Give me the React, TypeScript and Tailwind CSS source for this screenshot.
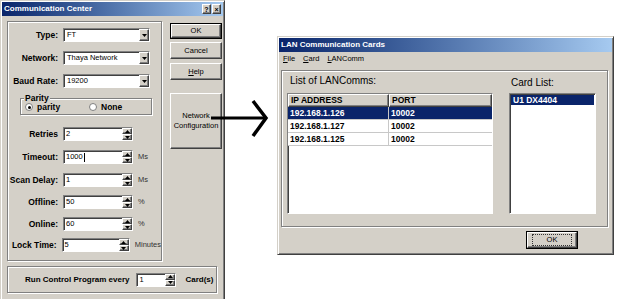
import React from 'react'

const sunken = 'border border-t-[#808080] border-l-[#808080] border-r-white border-b-white shadow-[inset_1px_1px_0_#404040]'
const raised = 'border border-t-white border-l-white border-r-[#404040] border-b-[#404040] shadow-[inset_-1px_-1px_0_#808080]'
const etched = 'border border-[#808080] shadow-[inset_1px_1px_0_#fff,1px_1px_0_#fff]'
const frame = 'border border-t-[#d4d0c8] border-l-[#d4d0c8] border-r-[#404040] border-b-[#404040] shadow-[inset_1px_1px_0_#fff,inset_-1px_-1px_0_#808080]'

const DownArrow = () => (
  <svg width="5" height="3" viewBox="0 0 5 3">
    <path d="M0 0h5L2.5 3z" fill="#000" />
  </svg>
)

const ComboBox = ({ value }: { value: string }) => (
  <div className={`flex h-[14px] w-[87px] bg-white ${sunken}`}>
    <span className="flex-1 pl-[3px] text-[7.5px] leading-[12px] text-black">{value}</span>
    <div className={`flex w-[10px] items-center justify-center bg-[#d4d0c8] ${raised}`}>
      <DownArrow />
    </div>
  </div>
)

const SpinBox = ({ value, caret }: { value: string; caret?: boolean }) => (
  <div className={`flex h-[14px] w-[70px] bg-white ${sunken}`}>
    <span className="flex flex-1 items-center pl-[2px] text-[7.5px] leading-[12px] text-black">
      {value}
      {caret && <span className="ml-[1px] inline-block h-[9px] w-[1px] bg-black" />}
    </span>
    <div className="flex w-[10px] flex-col bg-[#d4d0c8]">
      <div className={`flex flex-1 items-center justify-center ${raised}`}>
        <svg width="5" height="3" viewBox="0 0 5 3">
          <path d="M0 3h5L2.5 0z" fill="#000" />
        </svg>
      </div>
      <div className={`flex flex-1 items-center justify-center ${raised}`}>
        <DownArrow />
      </div>
    </div>
  </div>
)

const FieldRow = ({ label, children, unit, className = '' }: { label: string; children: React.ReactNode; unit?: string; className?: string }) => (
  <div className={`flex h-[14px] items-center ${className}`}>
    <span className="w-[55px] pr-[5px] text-right text-[8.5px] font-bold text-black">{label}</span>
    {children}
    {unit && <span className="ml-[5px] text-[7.5px] text-[#333]">{unit}</span>}
  </div>
)

const Radio = ({ checked }: { checked?: boolean }) => (
  <span className="inline-flex h-[8px] w-[8px] items-center justify-center rounded-full border border-[#808080] bg-white">
    {checked && <span className="h-[3px] w-[3px] rounded-full bg-black" />}
  </span>
)

const TitleBar = ({ title, buttons }: { title: string; buttons?: boolean }) => (
  <div className="flex h-[14px] items-center bg-gradient-to-r from-[#0a246a] to-[#a6caf0] pl-[2px] pr-[2px]">
    <span className="flex-1 text-[8px] font-bold text-white">{title}</span>
    {buttons && (
      <div className="flex gap-[1px]">
        <span className={`flex h-[10px] w-[9px] items-center justify-center bg-[#d4d0c8] text-[7px] font-bold leading-none text-black ${raised}`}>?</span>
        <span className={`flex h-[10px] w-[9px] items-center justify-center bg-[#d4d0c8] text-[7px] font-bold leading-none text-black ${raised}`}>×</span>
      </div>
    )}
  </div>
)

const Button = ({ children, className = '' }: { children: React.ReactNode; className?: string }) => (
  <div className={`flex items-center justify-center bg-[#d4d0c8] text-[7.5px] text-black ${raised} ${className}`}>{children}</div>
)

const CommunicationCenter = () => (
  <div className={`absolute left-0 top-0 h-[312px] w-[225px] bg-[#d4d0c8] p-[1px] ${frame}`}>
    <TitleBar title="Communication Center" buttons />
    <div className="flex gap-[8px] pl-[5px] pt-[5px]">
      <div className="flex w-[155px] flex-col">
        <div className={`flex h-[240px] flex-col pt-[6px] ${etched}`}>
          <FieldRow label="Type:"><ComboBox value="FT" /></FieldRow>
          <FieldRow label="Network:" className="mt-[9px]"><ComboBox value="Thaya Network" /></FieldRow>
          <FieldRow label="Baud Rate:" className="mt-[9px]"><ComboBox value="19200" /></FieldRow>
          <div className={`relative ml-[12px] mt-[10px] h-[17px] w-[132px] ${etched}`}>
            <span className="absolute -top-[6px] left-[3px] bg-[#d4d0c8] px-[1px] text-[8.5px] font-bold leading-[10px] text-black">Parity</span>
            <div className="flex h-full items-center pl-[4px] pt-[1px] text-[8.5px] font-bold text-black">
              <Radio checked />
              <span className="ml-[4px] w-[52px]">parity</span>
              <Radio />
              <span className="ml-[4px]">None</span>
            </div>
          </div>
          <FieldRow label="Retries" className="mt-[12px]"><SpinBox value="2" /></FieldRow>
          <FieldRow label="Timeout:" unit="Ms" className="mt-[9px]"><SpinBox value="1000" caret /></FieldRow>
          <FieldRow label="Scan Delay:" unit="Ms" className="mt-[9px]"><SpinBox value="1" /></FieldRow>
          <FieldRow label="Offline:" unit="%" className="mt-[8px]"><SpinBox value="50" /></FieldRow>
          <FieldRow label="Online:" unit="%" className="mt-[8px]"><SpinBox value="60" /></FieldRow>
          <FieldRow label="Lock Time:" unit="Minutes" className="mt-[7px]"><SpinBox value="5" /></FieldRow>
        </div>
      </div>
      <div className="flex w-[52px] flex-col pt-[2px]">
        <div className="border border-black">
          <Button className="h-[14px]">OK</Button>
        </div>
        <Button className="mt-[3px] h-[17px]">Cancel</Button>
        <Button className="mt-[4px] h-[17px]"><span><span className="underline">H</span>elp</span></Button>
        <Button className="mt-[13px] h-[56px] text-center leading-[10px]">
          <span>Network<br />Configuration</span>
        </Button>
      </div>
    </div>
    <div className={`ml-[5px] mt-[5px] flex h-[27px] w-[210px] items-center pl-[17px] ${etched}`}>
      <span className="text-[8px] font-bold text-black">Run Control Program every</span>
      <div className="ml-[7px]">
        <div className={`flex h-[14px] w-[40px] bg-white ${sunken}`}>
          <span className="flex-1 pl-[2px] text-[7.5px] leading-[12px] text-black">1</span>
          <div className="flex w-[10px] flex-col bg-[#d4d0c8]">
            <div className={`flex flex-1 items-center justify-center ${raised}`}>
              <svg width="5" height="3" viewBox="0 0 5 3"><path d="M0 3h5L2.5 0z" fill="#000" /></svg>
            </div>
            <div className={`flex flex-1 items-center justify-center ${raised}`}>
              <DownArrow />
            </div>
          </div>
        </div>
      </div>
      <span className="ml-[9px] text-[8px] font-bold text-black">Card(s)</span>
    </div>
  </div>
)

const rows = [
  { ip: '192.168.1.126', port: '10002', selected: true },
  { ip: '192.168.1.127', port: '10002' },
  { ip: '192.168.1.125', port: '10002' },
]

const LanCards = () => (
  <div className={`absolute left-[277px] top-[36px] h-[219px] w-[337px] bg-[#d4d0c8] p-[1px] shadow-[2px_2px_3px_rgba(0,0,0,0.15)] ${frame}`}>
    <TitleBar title="LAN Communication Cards" />
    <div className="flex h-[14px] items-center gap-[8px] pl-[4px] text-[7.5px] text-black">
      <span><span className="underline">F</span>ile</span>
      <span><span className="underline">C</span>ard</span>
      <span><span className="underline">L</span>ANComm</span>
    </div>
    <div className={`ml-[2px] mt-[4px] flex h-[157px] w-[327px] pl-[5px] pt-[2px] ${etched}`}>
      <div className="flex w-[206px] flex-col">
        <span className="h-[20px] pl-[3px] text-[10px] leading-[16px] text-black">List of LANComms:</span>
        <div className={`h-[121px] bg-white ${sunken}`}>
          <div className="flex h-[13px] bg-[#d4d0c8] text-[8.5px] font-bold text-black">
            <span className={`w-[101px] pl-[2px] leading-[11px] ${raised}`}>IP ADDRESS</span>
            <span className={`flex-1 pl-[2px] leading-[11px] ${raised}`}>PORT</span>
          </div>
          {rows.map((r) => (
            <div
              key={r.ip}
              className={`flex h-[13px] border-b border-[#c8c8c8] text-[8.5px] font-bold leading-[12px] ${r.selected ? 'bg-[#0a246a] text-white' : 'bg-white text-black'}`}
            >
              <span className="w-[101px] border-r border-[#c8c8c8] pl-[2px]">{r.ip}</span>
              <span className="flex-1 pl-[2px]">{r.port}</span>
            </div>
          ))}
        </div>
      </div>
      <div className="ml-[16px] flex w-[87px] flex-col">
        <span className="h-[20px] pl-[2px] pt-[3px] text-[10px] leading-[14px] text-black">Card List:</span>
        <div className={`h-[121px] bg-white p-[1px] ${sunken}`}>
          <div className="h-[10px] bg-[#0a246a] pl-[2px] text-[8.5px] font-bold leading-[10px] text-white">U1 DX4404</div>
        </div>
      </div>
    </div>
    <div className="flex justify-end pr-[34px] pt-[4px]">
      <div className="border border-black">
        <div className={`flex h-[16px] w-[50px] items-center justify-center bg-[#d4d0c8] ${raised}`}>
          <span className="border border-dotted border-[#333] px-[14px] text-[7.5px] leading-[10px] text-black">OK</span>
        </div>
      </div>
    </div>
  </div>
)

export default function App() {
  return (
    <div className="relative h-[299px] w-[621px] overflow-hidden bg-white font-['Liberation_Sans',Arial,sans-serif]">
      <CommunicationCenter />
      <LanCards />
      <svg className="absolute left-0 top-0" width="621" height="299" viewBox="0 0 621 299">
        <line x1="211" y1="118" x2="265" y2="118" stroke="#000" strokeWidth="3" />
        <polyline points="253,101 266,118 253,136" fill="none" stroke="#000" strokeWidth="3.5" />
      </svg>
    </div>
  )
}
